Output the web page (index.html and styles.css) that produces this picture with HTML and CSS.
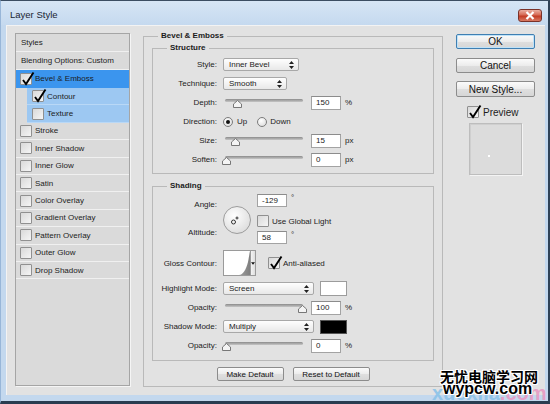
FILE: index.html
```html
<!DOCTYPE html>
<html>
<head>
<meta charset="utf-8">
<title>Layer Style</title>
<link rel="stylesheet" href="styles.css">
</head>
<body>
<div class="window">
  <div class="titlebar">
    <span class="title">Layer Style</span>
    <span class="close"><svg width="22" height="11" viewBox="0 0 22 11"><path d="M7.5 2 L14.5 9 M14.5 2 L7.5 9" stroke="#fff" stroke-width="2.2" fill="none"/></svg></span>
  </div>
  <div class="frame">
    <div class="client">
      <ul class="styles">
        <li class="hdr">Styles</li>
        <li class="plain">Blending Options: Custom</li>
        <li class="sel"><span class="cb"><svg class="chk" viewBox="-1 -1 14 14"><path d="M2 6 L5 10 L12.5 -1.5"/></svg></span>Bevel &amp; Emboss</li>
        <li class="sub"><span class="cb"><svg class="chk" viewBox="-1 -1 14 14"><path d="M2 6 L5 10 L12.5 -1.5"/></svg></span>Contour</li>
        <li class="sub"><span class="cb"></span>Texture</li>
        <li><span class="cb"></span>Stroke</li>
        <li><span class="cb"></span>Inner Shadow</li>
        <li><span class="cb"></span>Inner Glow</li>
        <li><span class="cb"></span>Satin</li>
        <li><span class="cb"></span>Color Overlay</li>
        <li><span class="cb"></span>Gradient Overlay</li>
        <li><span class="cb"></span>Pattern Overlay</li>
        <li><span class="cb"></span>Outer Glow</li>
        <li><span class="cb"></span>Drop Shadow</li>
      </ul>

      <fieldset class="group outer">
        <legend>Bevel &amp; Emboss</legend>
        <div class="outer-body">
          <fieldset class="group inner structure">
            <legend>Structure</legend>
            <div class="row">
              <span class="lbl">Style:</span>
              <span class="select w-style">Inner Bevel<svg width="5" height="8" viewBox="0 0 5 8"><path d="M2.5 0 L5 3 H0Z M2.5 8 L5 5 H0Z" fill="#222"/></svg></span>
            </div>
            <div class="row">
              <span class="lbl">Technique:</span>
              <span class="select w-tech">Smooth<svg width="5" height="8" viewBox="0 0 5 8"><path d="M2.5 0 L5 3 H0Z M2.5 8 L5 5 H0Z" fill="#222"/></svg></span>
            </div>
            <div class="row">
              <span class="lbl">Depth:</span>
              <span class="slider"><span class="track"></span><svg class="thumb" style="left:14px" viewBox="0 0 9 8"><path d="M4.5 0.5 L8.5 4 V7.5 H0.5 V4 Z"/></svg></span>
              <span class="num">150</span><span class="unit">%</span>
            </div>
            <div class="row">
              <span class="lbl">Direction:</span>
              <span class="radio"><span class="dot"></span></span><span class="rtext">Up</span>
              <span class="radio r2"></span><span class="rtext r2t">Down</span>
            </div>
            <div class="row">
              <span class="lbl">Size:</span>
              <span class="slider"><span class="track"></span><svg class="thumb" style="left:12px" viewBox="0 0 9 8"><path d="M4.5 0.5 L8.5 4 V7.5 H0.5 V4 Z"/></svg></span>
              <span class="num">15</span><span class="unit">px</span>
            </div>
            <div class="row">
              <span class="lbl">Soften:</span>
              <span class="slider"><span class="track"></span><svg class="thumb" style="left:3.5px" viewBox="0 0 9 8"><path d="M4.5 0.5 L8.5 4 V7.5 H0.5 V4 Z"/></svg></span>
              <span class="num">0</span><span class="unit">px</span>
            </div>
          </fieldset>

          <fieldset class="group inner shading">
            <legend>Shading</legend>
            <div class="angle">
              <div class="lbls"><span>Angle:</span><span>Altitude:</span></div>
              <svg class="dial" width="28" height="28" viewBox="0 0 28 28">
                <defs><radialGradient id="dg" cx="40%" cy="35%" r="70%"><stop offset="0" stop-color="#ffffff"/><stop offset="1" stop-color="#dcdcdc"/></radialGradient></defs>
                <circle cx="14" cy="14" r="13.5" fill="url(#dg)" stroke="#9c9c9c"/>
                <circle cx="10.5" cy="16" r="2" fill="none" stroke="#333" stroke-width="1"/>
                <path d="M14 10.5 V13.5 M12.5 12 H15.5" stroke="#333" stroke-width="1"/>
              </svg>
              <div class="actl">
                <div class="numrow"><span class="num h13">-129</span><span class="deg">°</span></div>
                <div class="cbrow"><span class="cb"></span><span>Use Global Light</span></div>
                <div class="numrow alt"><span class="num h13">58</span><span class="deg">°</span></div>
              </div>
            </div>
            <div class="row contour">
              <span class="lbl">Gloss Contour:</span>
              <span class="cthumb">
                <svg class="cbox" width="28" height="26" viewBox="0 0 28 26">
                  <defs><linearGradient id="cg" x1="0" y1="0" x2="1" y2="0"><stop offset="0" stop-color="#c8c8c8"/><stop offset="1" stop-color="#7f7f7f"/></linearGradient></defs>
                  <rect x="0.5" y="0.5" width="27" height="25" fill="#fff" stroke="#9a9a9a"/>
                  <path d="M1 25 L16 25 C20 24.5 23 20 25 12 C26 7 26.5 3 27 1 L27 25 Z" fill="url(#cg)"/>
                </svg>
                <span class="cdrop"><svg width="5" height="3" viewBox="0 0 5 3"><path d="M0 0 H5 L2.5 3Z" fill="#111"/></svg></span>
              </span>
              <span class="cb aa"><svg class="chk" viewBox="-1 -1 14 14"><path d="M2 6 L5 10 L12.5 -1.5"/></svg></span><span>Anti-aliased</span>
            </div>
            <div class="row first">
              <span class="lbl">Highlight Mode:</span>
              <span class="select w-mode">Screen<svg width="5" height="8" viewBox="0 0 5 8"><path d="M2.5 0 L5 3 H0Z M2.5 8 L5 5 H0Z" fill="#222"/></svg></span>
              <span class="swatch white"></span>
            </div>
            <div class="row">
              <span class="lbl">Opacity:</span>
              <span class="slider"><span class="track"></span><svg class="thumb" style="left:79.5px" viewBox="0 0 9 8"><path d="M4.5 0.5 L8.5 4 V7.5 H0.5 V4 Z"/></svg></span>
              <span class="num">100</span><span class="unit">%</span>
            </div>
            <div class="row">
              <span class="lbl">Shadow Mode:</span>
              <span class="select w-mode">Multiply<svg width="5" height="8" viewBox="0 0 5 8"><path d="M2.5 0 L5 3 H0Z M2.5 8 L5 5 H0Z" fill="#222"/></svg></span>
              <span class="swatch black"></span>
            </div>
            <div class="row">
              <span class="lbl">Opacity:</span>
              <span class="slider"><span class="track"></span><svg class="thumb" style="left:3px" viewBox="0 0 9 8"><path d="M4.5 0.5 L8.5 4 V7.5 H0.5 V4 Z"/></svg></span>
              <span class="num">0</span><span class="unit">%</span>
            </div>
          </fieldset>

          <div class="btns">
            <span class="btn small w-make">Make Default</span>
            <span class="btn small w-reset">Reset to Default</span>
          </div>
        </div>
      </fieldset>

      <div class="side">
        <span class="btn big ok">OK</span>
        <span class="btn big cancel">Cancel</span>
        <span class="btn big newstyle">New Style...</span>
        <div class="preview-row"><span class="cb"><svg class="chk" viewBox="-1 -1 14 14"><path d="M2 6 L5 10 L12.5 -1.5"/></svg></span><span>Preview</span></div>
        <div class="preview-box"><span class="pdot"></span></div>
      </div>
    </div>
  </div>
  <div class="wm-bg">xuexila<span class="pink">.com</span></div>
  <div class="wm-cn">无忧电脑学习网</div>
  <div class="wm-en">wypcw.com</div>
</div>
</body>
</html>
```
FILE: styles.css
```css
* { box-sizing: border-box; }
html, body { margin: 0; padding: 0; }
body {
  width: 550px; height: 404px; overflow: hidden;
  font-family: "Liberation Sans", Arial, sans-serif;
  font-size: 8px; color: #1c1c1c;
  background: #c4d8ee;
}
.window {
  position: relative;
  width: 550px; height: 404px;
  display: flex; flex-direction: column;
  background: #c3d8ee;
  border-top: 1px solid #3b4d62;
  border-right: 2px solid #2f4257;
  border-bottom: 3px solid #2a3c50;
  border-left: 1px solid #98b6d8;
}
.titlebar {
  height: 24px; flex: none;
  display: flex; justify-content: space-between; align-items: flex-start;
  padding: 0 6px 0 9px;
  background: linear-gradient(#d6e5f5, #c5d9ef);
}
.title { margin-top: 9px; font-size: 9.5px; line-height: 10px; color: #1a2533; }
.close {
  margin-top: 8px; width: 24px; height: 13px;
  display: flex; align-items: center; justify-content: center;
  border: 1px solid #7a3128; border-radius: 3px;
  background: linear-gradient(#eab0a3, #d66a55 45%, #c23b24 55%, #d97a63);
}
.frame { flex: 1; display: flex; padding: 0 3px 6px 5px; }
.client {
  flex: 1; display: flex; align-items: flex-start;
  padding: 8px 10px 0 9px;
  background: #e2e2e2;
  box-shadow: inset 1px 1px 0 #f3f3f3;
}

/* styles list */
.styles {
  width: 115px; height: 353px; flex: none;
  margin: 0; padding: 0; list-style: none;
  background: #dadada;
  border: 1px solid #a5a5a5;
  box-shadow: 1px 1px 0 #f5f5f5;
}
.styles li {
  display: flex; align-items: center;
  height: 17.4px; padding-left: 4px;
  border-bottom: 1px solid #f0f0f0;
  white-space: nowrap;
}
.styles li.hdr, .styles li.plain { height: 18px; padding-left: 5px; }
.styles li.sel { height: 18px; background: #3b95ee; border-bottom-color: #3b95ee; }
.styles li.sub { margin-left: 11px; padding-left: 5px; background: #9dc8f2; border-bottom-color: #b9d8f6; }
.styles li .cb { margin-right: 3px; }

.cb {
  flex: none; position: relative; display: inline-block;
  width: 12px; height: 12px;
  border: 1px solid #909090; border-radius: 1px;
  background: linear-gradient(135deg, #d9d9d9, #f5f5f5);
}
.chk {
  position: absolute; left: -1px; top: -1px;
  width: 14px; height: 14px; overflow: visible;
}
.chk path { fill: none; stroke: #000; stroke-width: 1.9; stroke-linejoin: miter; }

/* group boxes */
.group { margin: 0; padding: 0; border: 1px solid #b9b9b9; min-width: 0; }
.group > legend { margin-left: 14px; padding: 0 3px; font-weight: bold; line-height: 10px; }
.outer { width: 300px; margin: -2px 0 0 13px; flex: none; }
.outer-body { padding: 2px 8px 5px; }
.structure { padding: 2px 0 4px; }
.shading { margin-top: 7px; padding: 0 0 5px; }

.row { display: flex; align-items: center; height: 19px; white-space: nowrap; }
.lbl { width: 64px; margin-right: 6px; text-align: right; flex: none; }

.select {
  display: flex; align-items: center; justify-content: space-between;
  height: 13px; padding: 0 4px 0 5px;
  border: 1px solid #a8a8a8; border-radius: 2px;
  background: linear-gradient(#fefefe, #e8e8e8);
}
.w-style { width: 76px; }
.w-tech { width: 64px; }
.w-mode { width: 91px; }

.slider { position: relative; width: 82px; height: 14px; margin-right: 6px; flex: none; }
.track {
  display: block; height: 3px; margin: 3px 2px 0;
  border-radius: 2px;
  background: linear-gradient(#8b8b8b, #c6c6c6);
}
.thumb { position: absolute; top: 4px; width: 9px; height: 8px; margin-left: -4.5px; overflow: visible; }
.thumb path { fill: #f4f4f4; stroke: #777; stroke-width: 1; }

.num {
  display: flex; align-items: center;
  width: 30px; height: 14px; padding-left: 4px;
  background: #fff;
  border: 1px solid #a3a3a3; border-top-color: #8c8c8c;
  flex: none;
}
.num.h13 { height: 13px; }
.unit { margin-left: 4px; }

.radio {
  display: flex; align-items: center; justify-content: center;
  width: 10px; height: 10px; flex: none;
  border: 1px solid #7c7c7c; border-radius: 50%;
  background: radial-gradient(circle at 40% 35%, #ffffff, #d6d6d6);
}
.dot { width: 4px; height: 4px; border-radius: 50%; background: #111; }
.rtext { margin-left: 4px; }
.radio.r2 { margin-left: 10px; }
.rtext.r2t { margin-left: 3px; }

/* angle */
.angle { display: flex; height: 50px; margin-top: 3px; }
.angle .lbls {
  width: 64px; margin-right: 6px; flex: none;
  display: flex; flex-direction: column; align-items: flex-end;
  padding-top: 6px; gap: 18px; line-height: 10px;
}
.dial { margin-top: 12px; margin-right: 6px; flex: none; }
.actl { display: flex; flex-direction: column; align-items: flex-start; }
.numrow { display: flex; align-items: flex-start; }
.deg { margin-left: 4px; line-height: 8px; }
.cbrow { display: flex; align-items: center; height: 12px; margin-top: 8px; white-space: nowrap; }
.cbrow .cb { margin-right: 3px; }
.numrow.alt { margin-top: 4px; }

.row.contour { height: 26px; margin-top: 6px; }
.cthumb { display: flex; height: 26px; flex: none; }
.cdrop {
  width: 5px; height: 26px;
  display: flex; align-items: center; justify-content: center;
  border: 1px solid #9a9a9a; border-left: none;
  background: linear-gradient(90deg, #f4f4f4, #dedede);
}
.cb.aa { margin-left: 12px; margin-right: 3px; }
.row.first { margin-top: 3px; }
.swatch { width: 27px; height: 15px; margin-left: 6px; flex: none; border: 1px solid #9c9c9c; }
.swatch.white { background: #fff; }
.swatch.black { background: #000; height: 14px; border-color: #555; }

/* buttons */
.btn {
  display: flex; align-items: center; justify-content: center;
  border: 1px solid #8c8c8c; border-radius: 2px;
  background: linear-gradient(#fbfbfb, #ececec 50%, #dfdfdf 51%, #d6d6d6);
  color: #111; white-space: nowrap; flex: none;
}
.btns { display: flex; justify-content: center; gap: 9px; margin-top: 6px; }
.btn.small { height: 14px; font-size: 8px; }
.w-make { width: 67px; }
.w-reset { width: 77px; }

.side {
  width: 79px; margin-left: 13px; flex: none;
  display: flex; flex-direction: column; align-items: flex-start;
}
.btn.big { width: 79px; height: 15px; font-size: 10px; }
.btn.ok { margin-top: 1px; border-color: #3f7fb2; box-shadow: inset 0 0 0 1px #bfe2f8; }
.btn.cancel { margin-top: 9px; }
.btn.newstyle { margin-top: 8px; height: 16px; }
.preview-row { display: flex; align-items: center; margin: 9px 0 0 11px; font-size: 10px; height: 12px; }
.preview-row .cb { margin-right: 4px; }
.preview-box {
  position: relative;
  width: 53px; height: 52px; margin: 5px 0 0 13px;
  border: 1px solid #bdbdbd;
  background: #dcdcdc;
  box-shadow: inset 1px 1px 0 #cfcfcf, 1px 1px 0 #f4f4f4;
}
.pdot { position: absolute; left: 18px; top: 31px; width: 2px; height: 2px; background: #fff; }

/* watermark overlay */
.wm-bg {
  position: absolute; left: 431px; top: 382px;
  font: bold 20px/20px "Liberation Sans", Arial, sans-serif;
  color: #8cc3e9; opacity: 0.9;
}
.wm-bg .pink { color: #e79ac4; }
.wm-cn, .wm-en {
  position: absolute; color: #000;
  text-shadow: 1px 0 0 #fff, -1px 0 0 #fff, 0 1px 0 #fff, 0 -1px 0 #fff,
               1px 1px 0 #fff, -1px -1px 0 #fff, 1px -1px 0 #fff, -1px 1px 0 #fff;
}
.wm-cn { left: 439px; top: 368px; font: bold 14px/14px "Noto Sans CJK SC", sans-serif; }
.wm-en { left: 442px; top: 380px; font: bold 16px/16px "Liberation Sans", Arial, sans-serif; }
```
